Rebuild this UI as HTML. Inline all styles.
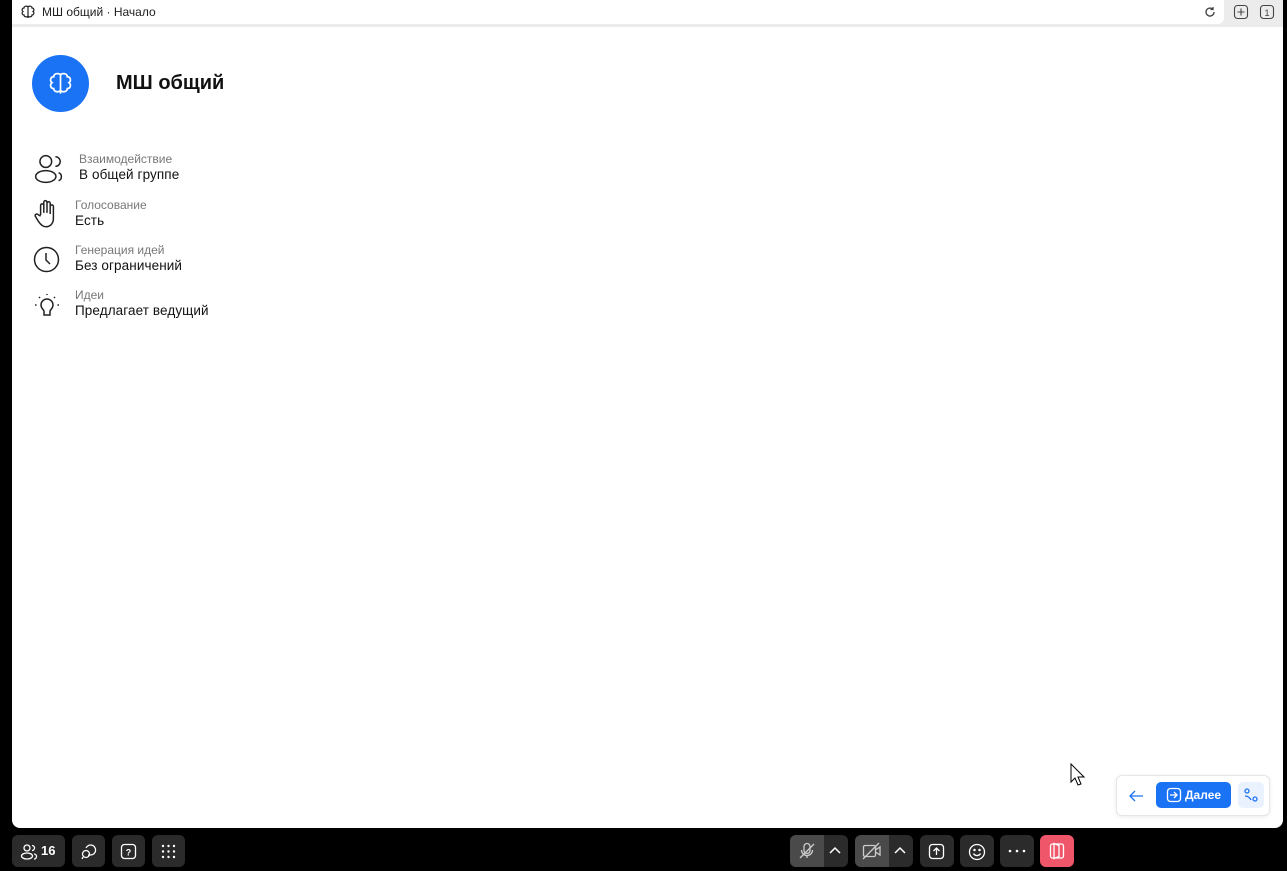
<!DOCTYPE html>
<html><head><meta charset="utf-8"><style>
*{margin:0;padding:0;box-sizing:border-box}
body{width:1287px;height:871px;background:#000;font-family:"Liberation Sans",sans-serif;position:relative;overflow:hidden}
.panel{position:absolute;left:12px;top:0;width:1271px;height:828px;background:#fff;border-radius:0 0 8px 8px;overflow:hidden}
.tb{position:absolute;left:0;top:0;width:1271px;height:27px;background:#ececec}
.tab{position:absolute;left:0;top:0;width:1212px;height:24px;background:#fff;border-radius:0 0 6px 0}
.tab span{position:absolute;left:30px;top:5px;font-size:12px;color:#222}
.abs{position:absolute}
.title{left:104px;top:72px;font-size:20px;font-weight:bold;color:#111}
.lbl{font-size:12px;color:#777}
.val{font-size:13.5px;color:#111;margin-top:1px;letter-spacing:.1px}
.btn{position:absolute;top:835px;height:32px;background:#2b2b2b;border-radius:6px}
</style></head><body>
<div class="panel">
 <div class="tb"><div class="tab">
  <svg class="abs" style="left:8px;top:4px" width="16" height="16" viewBox="0 0 16 16" fill="none" stroke="#222" stroke-width="1.2"><path d="M8 2v12M8 3c-1-1.5-4-1-4 1-2 0-2.5 2.5-1 3.5-1.5 1-1 3.5 1 3.5 0 2 3 2.5 4 1M8 3c1-1.5 4-1 4 1 2 0 2.5 2.5 1 3.5 1.5 1 1 3.5-1 3.5 0 2-3 2.5-4 1"/></svg>
  <span>МШ общий · Начало</span>
  <svg class="abs" style="left:1192px;top:6px" width="12" height="12" viewBox="0 0 12 12" fill="none" stroke="#444" stroke-width="1.3"><path d="M10 6a4 4 0 1 1-1.2-2.8M9 1v2.5H6.5"/></svg>
 </div>
  <svg class="abs" style="left:1221px;top:4px" width="16" height="16" viewBox="0 0 16 16" fill="none" stroke="#444" stroke-width="1.1"><rect x="1.5" y="1.5" width="13" height="13" rx="3"/><path d="M8 4.5v7M4.5 8h7"/></svg>
  <svg class="abs" style="left:1247px;top:4px" width="16" height="16" viewBox="0 0 16 16" fill="none" stroke="#444" stroke-width="1.1"><rect x="1.5" y="1.5" width="13" height="13" rx="3"/><text x="8" y="12" font-size="9" text-anchor="middle" fill="#444" stroke="none" font-family="Liberation Sans">1</text></svg>
 </div>
 <div class="abs" style="left:20px;top:55px;width:57px;height:57px;border-radius:50%;background:#1a73f5">
  <svg class="abs" style="left:15px;top:15px" width="27" height="27" viewBox="0 0 16 16" fill="none" stroke="#fff" stroke-width="1"><path d="M8 2v12M8 3c-1-1.5-4-1-4 1-2 0-2.5 2.5-1 3.5-1.5 1-1 3.5 1 3.5 0 2 3 2.5 4 1M8 3c1-1.5 4-1 4 1 2 0 2.5 2.5 1 3.5 1.5 1 1 3.5-1 3.5 0 2-3 2.5-4 1"/></svg>
 </div>
 <div class="abs title">МШ общий</div>
 <svg class="abs" style="left:21px;top:153px" width="32" height="32" viewBox="0 0 30 30" fill="none" stroke="#222" stroke-width="1.4"><circle cx="12" cy="8" r="5.5"/><ellipse cx="12" cy="22" rx="9.5" ry="5.5"/><path d="M21 3.5a4.5 4.5 0 0 1 0 9M24 18.5a4 4 0 0 1 0 7.5"/></svg>
 <div class="abs" style="left:67px;top:152px"><div class="lbl">Взаимодействие</div><div class="val">В общей группе</div></div>
 <svg class="abs" style="left:21px;top:198px" width="28" height="32" viewBox="0 0 26 30" fill="none" stroke="#222" stroke-width="1.4"><path d="M7 16V7a1.5 1.5 0 0 1 3 0v7V4a1.5 1.5 0 0 1 3 0v10V5a1.5 1.5 0 0 1 3 0v10V8a1.5 1.5 0 0 1 3 0v11c0 5-3 8-7 8-3 0-5-2-7-5l-3-5a1.5 1.5 0 0 1 2.5-1.5L7 17"/></svg>
 <div class="abs" style="left:63px;top:198px"><div class="lbl">Голосование</div><div class="val">Есть</div></div>
 <svg class="abs" style="left:21px;top:246px" width="27" height="27" viewBox="0 0 27 27" fill="none" stroke="#222" stroke-width="1.5"><circle cx="13.5" cy="13.5" r="12"/><path d="M13 7v7l4 4"/></svg>
 <div class="abs" style="left:63px;top:243px"><div class="lbl">Генерация идей</div><div class="val">Без ограничений</div></div>
 <svg class="abs" style="left:20px;top:291px" width="30" height="30" viewBox="0 0 30 28" fill="none" stroke="#222" stroke-width="1.5"><path d="M9 13a6 6 0 1 1 12 0c0 3-2 4-3 6v4h-6v-4c-1-2-3-3-3-6z"/><path d="M15 2v1M7 5l1 1M23 5l-1 1M3 13h1.5M25.5 13H27"/></svg>
 <div class="abs" style="left:63px;top:288px"><div class="lbl">Идеи</div><div class="val">Предлагает ведущий</div></div>

 <div class="abs" style="left:1104px;top:775px;width:154px;height:41px;background:#fff;border:1px solid #e6e6e6;border-radius:6px;box-shadow:0 1px 4px rgba(0,0,0,.08)">
  <svg class="abs" style="left:11px;top:12px" width="16" height="16" viewBox="0 0 16 16" fill="none" stroke="#1a73f5" stroke-width="1.3"><path d="M15 8H2M7 3L2 8l5 5"/></svg>
  <div class="abs" style="left:39px;top:6px;width:75px;height:26px;background:#1a73f5;border-radius:5px;color:#fff;font-size:12px;font-weight:bold;line-height:26px;padding-left:29px">Далее
   <svg class="abs" style="left:10px;top:5px" width="16" height="16" viewBox="0 0 16 16" fill="none" stroke="#fff" stroke-width="1.3"><rect x="1.5" y="1.5" width="13" height="13" rx="3"/><path d="M4 8h7M8 5l3 3-3 3"/></svg></div>
  <div class="abs" style="left:121px;top:6px;width:26px;height:26px;background:#eaf2ff;border-radius:5px">
   <svg class="abs" style="left:5px;top:5px" width="16" height="16" viewBox="0 0 16 16" fill="none" stroke="#1a73f5" stroke-width="1.3"><circle cx="4" cy="4" r="2"/><circle cx="12" cy="12" r="2"/><path d="M3 9l4 4M9 3l4 4" stroke="none"/><path d="M2 9q4 0 6 4"/></svg></div>
 </div>
</div>
<svg class="abs" style="left:1070px;top:763px" width="16" height="24" viewBox="0 0 16 24"><path d="M1 1v18l4-4 3 7 3-1-3-7h6z" fill="#fff" stroke="#000"/></svg>

<div class="btn" style="left:12px;width:53px"><svg class="abs" style="left:8px;top:8px" width="18" height="18" viewBox="0 0 18 18" fill="none" stroke="#fff" stroke-width="1.3"><circle cx="7" cy="5" r="3"/><ellipse cx="7" cy="13" rx="5.5" ry="3"/><path d="M12 2.5a2.5 2.5 0 0 1 0 5M14 11a2.5 2.5 0 0 1 0 5"/></svg><span class="abs" style="left:29px;top:8px;color:#fff;font-size:13px;font-weight:bold">16</span></div>
<div class="btn" style="left:72px;width:33px"><svg class="abs" style="left:8px;top:8px" width="17" height="17" viewBox="0 0 17 17" fill="none" stroke="#fff" stroke-width="1.3"><path d="M6 5a5 5 0 1 1 5 7H8"/><circle cx="6" cy="11" r="3.5"/><path d="M3 14l-1 2"/></svg></div>
<div class="btn" style="left:112px;width:33px"><svg class="abs" style="left:8px;top:8px" width="17" height="17" viewBox="0 0 17 17" fill="none" stroke="#fff" stroke-width="1.3"><rect x="1.5" y="1.5" width="14" height="14" rx="3"/><text x="8.5" y="12.5" font-size="9" font-weight="bold" text-anchor="middle" fill="#fff" stroke="none" font-family="Liberation Sans">?</text></svg></div>
<div class="btn" style="left:152px;width:33px"><svg class="abs" style="left:8px;top:8px" width="17" height="17" viewBox="0 0 17 17" fill="#fff"><circle cx="3" cy="3" r="1.2"/><circle cx="8.5" cy="3" r="1.2"/><circle cx="14" cy="3" r="1.2"/><circle cx="3" cy="8.5" r="1.2"/><circle cx="8.5" cy="8.5" r="1.2"/><circle cx="14" cy="8.5" r="1.2"/><circle cx="3" cy="14" r="1.2"/><circle cx="8.5" cy="14" r="1.2"/><circle cx="14" cy="14" r="1.2"/></svg></div>

<div class="btn" style="left:790px;width:58px"><div class="abs" style="left:0;top:0;width:34px;height:32px;background:#4a4a4a;border-radius:6px 0 0 6px"></div>
 <svg class="abs" style="left:8px;top:7px" width="18" height="18" viewBox="0 0 18 18" fill="none" stroke="#ccc" stroke-width="1.3"><rect x="6" y="1.5" width="6" height="10" rx="3"/><path d="M3.5 8a5.5 5.5 0 0 0 11 0M9 13.5V16M2 16L16 2"/></svg>
 <svg class="abs" style="left:39px;top:11px" width="12" height="10" viewBox="0 0 12 10" fill="none" stroke="#fff" stroke-width="1.5"><path d="M1 7l5-5 5 5"/></svg></div>
<div class="btn" style="left:855px;width:58px"><div class="abs" style="left:0;top:0;width:34px;height:32px;background:#4a4a4a;border-radius:6px 0 0 6px"></div>
 <svg class="abs" style="left:7px;top:7px" width="20" height="18" viewBox="0 0 20 18" fill="none" stroke="#ccc" stroke-width="1.3"><rect x="1.5" y="3.5" width="12" height="11" rx="1.5"/><path d="M13.5 8l4.5-3v8l-4.5-3M1 17L17 1"/></svg>
 <svg class="abs" style="left:39px;top:11px" width="12" height="10" viewBox="0 0 12 10" fill="none" stroke="#fff" stroke-width="1.5"><path d="M1 7l5-5 5 5"/></svg></div>
<div class="btn" style="left:920px;width:34px"><svg class="abs" style="left:8px;top:8px" width="17" height="17" viewBox="0 0 17 17" fill="none" stroke="#fff" stroke-width="1.3"><rect x="1.5" y="1.5" width="14" height="14" rx="3"/><path d="M8.5 12V5M5.5 8l3-3 3 3"/></svg></div>
<div class="btn" style="left:960px;width:34px"><svg class="abs" style="left:8px;top:8px" width="18" height="18" viewBox="0 0 18 18" fill="none" stroke="#fff" stroke-width="1.3"><circle cx="9" cy="9" r="7.5"/><path d="M5.5 10.5a4 4 0 0 0 7 0"/><circle cx="6.5" cy="7" r=".6" fill="#fff"/><circle cx="11.5" cy="7" r=".6" fill="#fff"/></svg></div>
<div class="btn" style="left:1000px;width:34px"><svg class="abs" style="left:8px;top:14px" width="18" height="4" viewBox="0 0 18 4" fill="#fff"><circle cx="2" cy="2" r="1.3"/><circle cx="9" cy="2" r="1.3"/><circle cx="16" cy="2" r="1.3"/></svg></div>
<div class="btn" style="left:1040px;width:34px;background:#f0566a"><svg class="abs" style="left:8px;top:7px" width="18" height="18" viewBox="0 0 18 18" fill="none" stroke="#fff" stroke-width="1.3"><rect x="2.5" y="2" width="13" height="14" rx="2"/><path d="M6 1.5l5 2v11l-5 2z"/></svg></div>
</body></html>
